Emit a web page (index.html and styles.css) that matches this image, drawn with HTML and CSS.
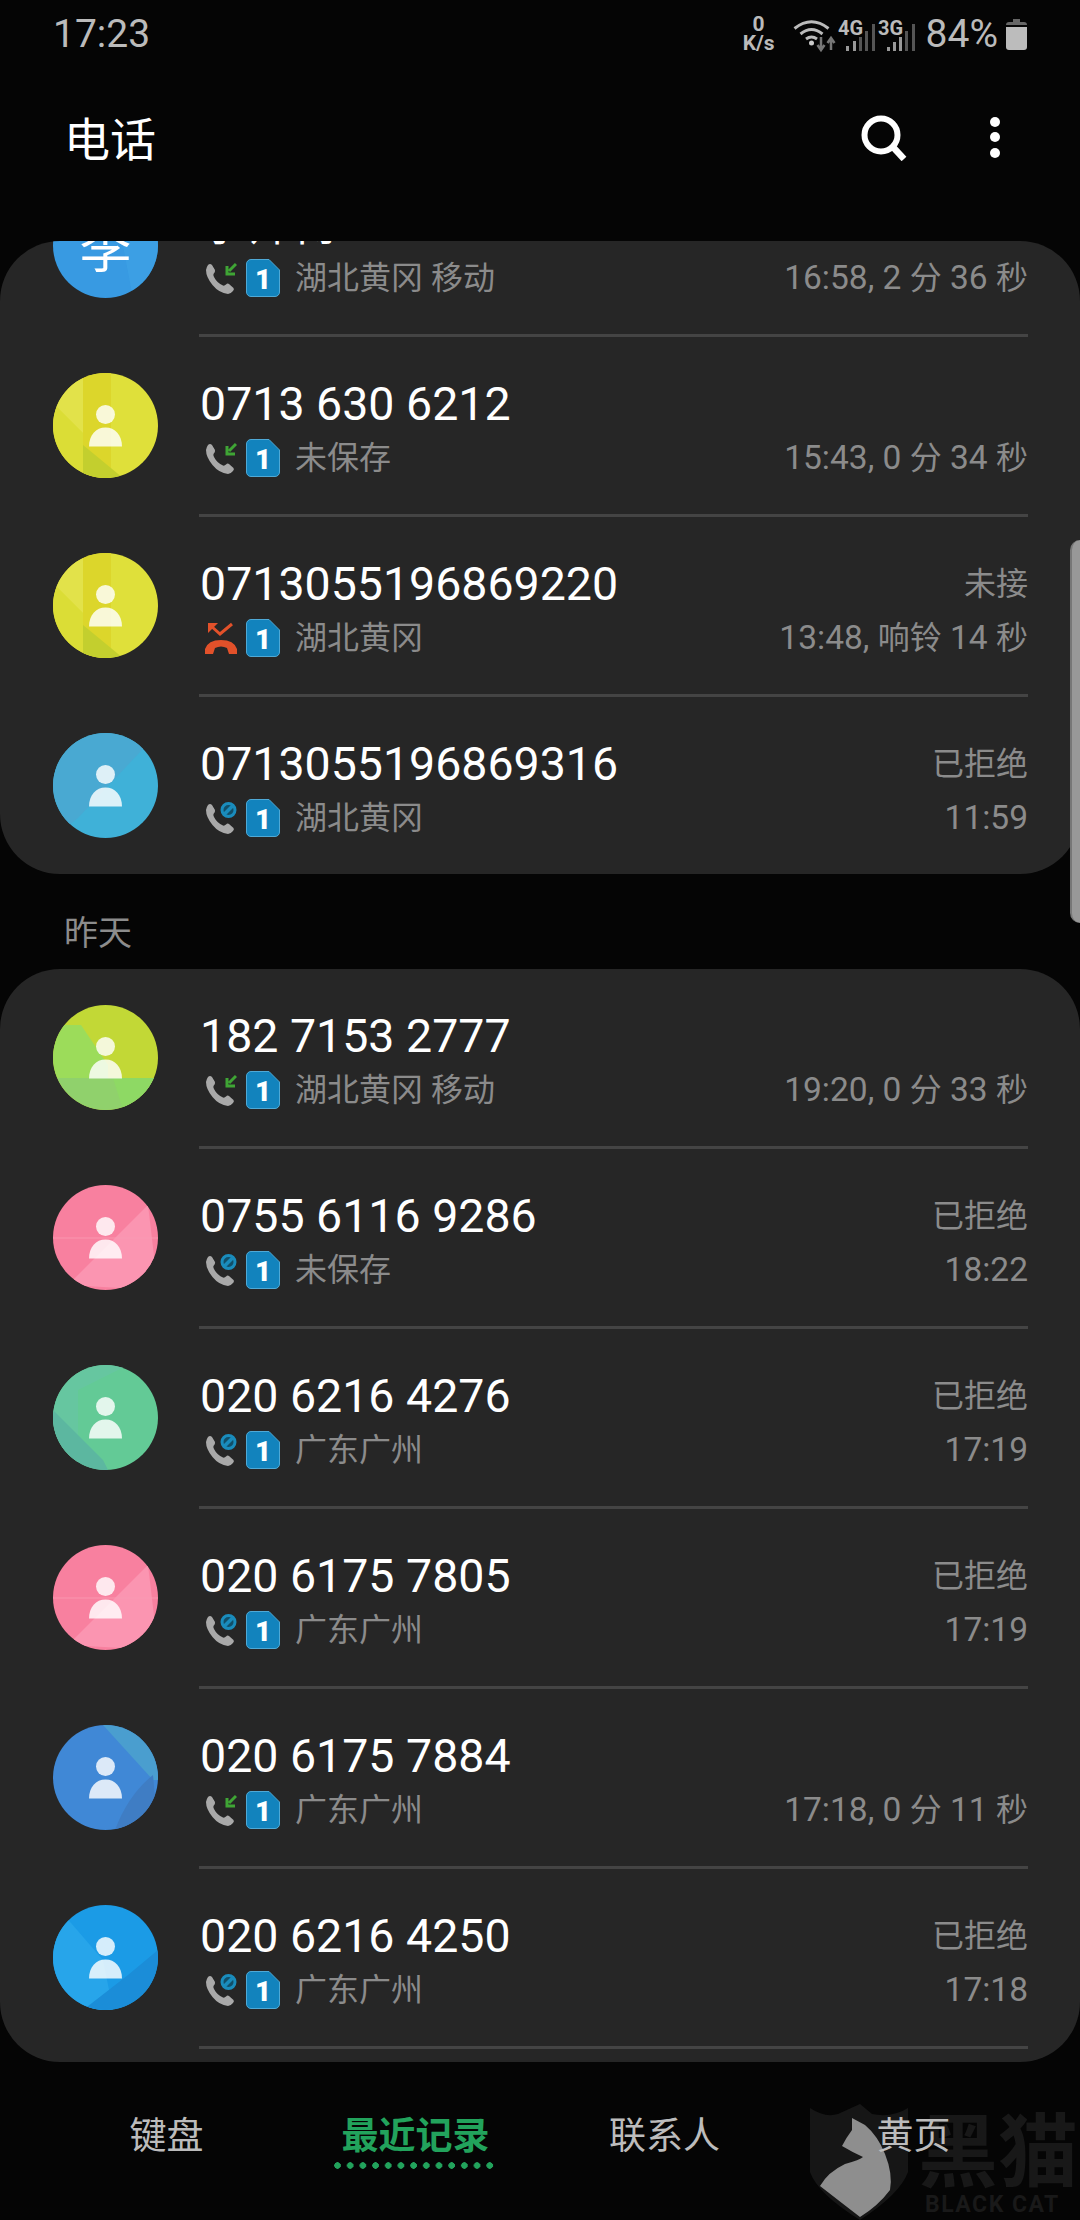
FILE: index.html
```html
<!DOCTYPE html>
<html lang="zh-CN">
<head>
<meta charset="utf-8">
<title>电话</title>
<link rel="stylesheet" href="styles.css">
</head>
<body>
<svg class="defs" aria-hidden="true">
  <symbol id="handset" viewBox="0 0 34 38"><path d="M5 6Q7 4 9 6L12 11Q12.5 13 10.5 15Q10 16 11 18Q14 24 20 26.5Q21.5 27 23 25.5Q24.5 24 26 25L30.5 29Q31.5 30.5 30 32Q27.5 35 25 35Q16 34 9.5 26Q3 18 3 11Q3.5 8 5 6Z" fill="#a9a9a9"/></symbol>
  <symbol id="call-in" viewBox="0 0 34 38"><use href="#handset"/><path d="M33 5L26 12M24 7V15H32" fill="none" stroke="#3fa535" stroke-width="3"/></symbol>
  <symbol id="call-rej" viewBox="0 0 34 38"><use href="#handset"/><circle cx="25.5" cy="11" r="6.5" fill="#114f69" stroke="#1a8cbc" stroke-width="3"/><path d="M21 15.5L30 6.5" stroke="#1a8cbc" stroke-width="3.5"/></symbol>
  <symbol id="call-miss" viewBox="0 0 34 38"><path d="M8 7L17 15L29 5" fill="none" stroke="#e2512a" stroke-width="3"/><path d="M5 4H15L5 14Z" fill="#e2512a"/><path d="M2 35V30Q5 21 18 21Q31 21 34 30V35H26L24 29Q18 26 12 29L10 35Z" fill="#e2512a"/></symbol>
  <symbol id="sim" viewBox="0 0 34 38"><path d="M5 .5H23L33.5 11V33A4.500 4.500 0 0 1 29 37.500H5A4.500 4.500 0 0 1 .5 33V5A4.500 4.500 0 0 1 5 .5Z" fill="#1283bd" stroke="#4fa9d6"/><text x="17" y="30" text-anchor="middle" class="sim-num">1</text></symbol>
  <symbol id="person" viewBox="0 0 105 105"><circle cx="52.500" cy="41.500" r="9.500" fill="#fff" fill-opacity=".82"/><path d="M36 73.500C36 62 43 54.500 52.500 54.500C62 54.500 69 62 69 73.500Z" fill="#fff" fill-opacity=".82"/></symbol>
</svg>

<header class="status">
  <span class="clock">17:23</span>
  <div class="status-right">
    <div class="speed"><span>0</span><span>K/s</span></div>
    <svg class="net" viewBox="0 0 125 40" width="125" height="40">
      <g fill="none" stroke="#bbb" stroke-width="3"><path d="M3.500 14.500Q20.500 1 37.500 14.500"/><path d="M9.500 20Q20.500 11 31.500 20"/><path d="M15 25Q20.500 21 26 25"/></g>
      <circle cx="20.500" cy="29" r="2.500" fill="#ccc"/>
      <path d="M30 23V35M26.500 31L30 36L33.500 31M40 36V25M36.500 29L40 24L43.500 29" fill="none" stroke="#777" stroke-width="2.500"/>
      <text x="47" y="21" class="net-label">4G</text>
      <text x="87" y="21" class="net-label">3G</text>
      <g fill="#999"><rect x="55" y="32" width="3" height="5"/><rect x="62" y="27" width="3" height="10"/><rect x="96" y="33" width="3" height="4"/><rect x="102" y="28" width="3" height="9"/><rect x="108" y="23" width="3" height="14"/></g>
      <g fill="#555"><rect x="68" y="23" width="3" height="14"/><rect x="74" y="17" width="3" height="20"/><rect x="81" y="10" width="3" height="27"/><rect x="114" y="17" width="3" height="20"/><rect x="121" y="10" width="3" height="27"/></g>
    </svg>
    <span class="battery-text">84%</span>
    <svg class="battery" viewBox="0 0 21 31" width="21" height="31"><path d="M7 0H14V3H18Q21 3 21 6H0Q0 3 3 3H7Z" fill="#666"/><path d="M0 8H21V28Q21 31 18 31H3Q0 31 0 28Z" fill="#bcbcbc"/></svg>
  </div>
</header>

<div class="appbar">
  <h1 class="title">电话</h1>
  <div class="actions">
    <svg class="search" viewBox="0 0 46 46" width="46" height="46"><circle cx="20" cy="20" r="16.500" fill="none" stroke="#fff" stroke-width="6"/><path d="M31 31L43 44" stroke="#fff" stroke-width="6.500"/></svg>
    <svg class="more" viewBox="0 0 12 44" width="12" height="44"><circle cx="6" cy="6" r="5" fill="#fff"/><circle cx="6" cy="21" r="5" fill="#fff"/><circle cx="6" cy="37" r="5" fill="#fff"/></svg>
  </div>
</div>

<main>
<section class="card card-today">
  <div class="rows rows-scrolled">
    <article class="row">
      <div class="avatar avatar-letter"><svg viewBox="0 0 105 105"><rect width="105" height="105" fill="#389ae2"/><path d="M60 0H105V105H80Z" fill="#3fa3e6" fill-opacity=".6"/></svg><span class="letter">李</span></div>
      <div class="body">
        <div class="line"><span class="name">李师傅</span></div>
        <div class="line"><div class="meta"><svg class="ic"><use href="#call-in"/></svg><svg class="ic sim"><use href="#sim"/></svg><span class="place">湖北黄冈 移动</span></div><span class="side">16:58, 2 <span class="cn">分</span> 36 <span class="cn">秒</span></span></div>
      </div>
    </article>
    <article class="row">
      <div class="avatar"><svg viewBox="0 0 105 105"><rect width="105" height="105" fill="#dfe03a"/><path d="M0 0H30V60L0 30Z" fill="#e2e24a"/><path d="M0 30L30 60V105H0Z" fill="#dbdd36"/><path d="M30 0H58V105H30Z" fill="#dcd62b"/><path d="M30 72L70 105H30Z" fill="#c3cf2e"/></svg><svg class="person"><use href="#person"/></svg></div>
      <div class="body">
        <div class="line"><span class="name">0713 630 6212</span></div>
        <div class="line"><div class="meta"><svg class="ic"><use href="#call-in"/></svg><svg class="ic sim"><use href="#sim"/></svg><span class="place">未保存</span></div><span class="side">15:43, 0 <span class="cn">分</span> 34 <span class="cn">秒</span></span></div>
      </div>
    </article>
    <article class="row">
      <div class="avatar"><svg viewBox="0 0 105 105"><rect width="105" height="105" fill="#dfe03a"/><path d="M0 0H30V60L0 30Z" fill="#e2e24a"/><path d="M0 30L30 60V105H0Z" fill="#dbdd36"/><path d="M30 0H58V105H30Z" fill="#dcd62b"/><path d="M30 72L70 105H30Z" fill="#c3cf2e"/></svg><svg class="person"><use href="#person"/></svg></div>
      <div class="body">
        <div class="line"><span class="name">0713055196869220</span><span class="side cn">未接</span></div>
        <div class="line"><div class="meta"><svg class="ic"><use href="#call-miss"/></svg><svg class="ic sim"><use href="#sim"/></svg><span class="place">湖北黄冈</span></div><span class="side">13:48, <span class="cn">响铃</span> 14 <span class="cn">秒</span></span></div>
      </div>
    </article>
    <article class="row row-last">
      <div class="avatar"><svg viewBox="0 0 105 105"><rect width="105" height="105" fill="#3fb1d8"/><path d="M0 0H105L25 85L0 105Z" fill="#49a9d2"/></svg><svg class="person"><use href="#person"/></svg></div>
      <div class="body">
        <div class="line"><span class="name">0713055196869316</span><span class="side cn">已拒绝</span></div>
        <div class="line"><div class="meta"><svg class="ic"><use href="#call-rej"/></svg><svg class="ic sim"><use href="#sim"/></svg><span class="place">湖北黄冈</span></div><span class="side">11:59</span></div>
      </div>
    </article>
  </div>
</section>

<h2 class="day">昨天</h2>

<section class="card card-yesterday">
  <article class="row">
    <div class="avatar"><svg viewBox="0 0 105 105"><rect width="105" height="105" fill="#c2d836"/><path d="M0 20H28L55 60V73H0Z" fill="#9cdc5a"/><path d="M0 73H105V105H0Z" fill="#90d16c"/><path d="M60 73H105V105H70Z" fill="#8ed964"/></svg><svg class="person"><use href="#person"/></svg></div>
    <div class="body">
      <div class="line"><span class="name">182 7153 2777</span></div>
      <div class="line"><div class="meta"><svg class="ic"><use href="#call-in"/></svg><svg class="ic sim"><use href="#sim"/></svg><span class="place">湖北黄冈 移动</span></div><span class="side">19:20, 0 <span class="cn">分</span> 33 <span class="cn">秒</span></span></div>
    </div>
  </article>
  <article class="row">
    <div class="avatar"><svg viewBox="0 0 105 105"><rect width="105" height="105" fill="#f8809f"/><path d="M15 100L95 20L105 105Z" fill="#fb95b1"/><path d="M0 52H105V54H0Z" fill="#fb9ab5" fill-opacity=".4"/></svg><svg class="person"><use href="#person"/></svg></div>
    <div class="body">
      <div class="line"><span class="name">0755 6116 9286</span><span class="side cn">已拒绝</span></div>
      <div class="line"><div class="meta"><svg class="ic"><use href="#call-rej"/></svg><svg class="ic sim"><use href="#sim"/></svg><span class="place">未保存</span></div><span class="side">18:22</span></div>
    </div>
  </article>
  <article class="row">
    <div class="avatar"><svg viewBox="0 0 105 105"><rect width="105" height="105" fill="#63ca96"/><path d="M0 0H75L25 25V105H0Z" fill="#66c6a0"/><path d="M0 45L50 95L55 105H0Z" fill="#5cb7a0"/></svg><svg class="person"><use href="#person"/></svg></div>
    <div class="body">
      <div class="line"><span class="name">020 6216 4276</span><span class="side cn">已拒绝</span></div>
      <div class="line"><div class="meta"><svg class="ic"><use href="#call-rej"/></svg><svg class="ic sim"><use href="#sim"/></svg><span class="place">广东广州</span></div><span class="side">17:19</span></div>
    </div>
  </article>
  <article class="row">
    <div class="avatar"><svg viewBox="0 0 105 105"><rect width="105" height="105" fill="#f8809f"/><path d="M15 100L95 20L105 105Z" fill="#fb95b1"/><path d="M0 52H105V54H0Z" fill="#fb9ab5" fill-opacity=".4"/></svg><svg class="person"><use href="#person"/></svg></div>
    <div class="body">
      <div class="line"><span class="name">020 6175 7805</span><span class="side cn">已拒绝</span></div>
      <div class="line"><div class="meta"><svg class="ic"><use href="#call-rej"/></svg><svg class="ic sim"><use href="#sim"/></svg><span class="place">广东广州</span></div><span class="side">17:19</span></div>
    </div>
  </article>
  <article class="row">
    <div class="avatar"><svg viewBox="0 0 105 105"><rect width="105" height="105" fill="#4088d6"/><path d="M50 0H105V55H100Z" fill="#4a9ecf"/><path d="M100 50L105 105H62Q75 70 100 50Z" fill="#3f7dc4"/></svg><svg class="person"><use href="#person"/></svg></div>
    <div class="body">
      <div class="line"><span class="name">020 6175 7884</span></div>
      <div class="line"><div class="meta"><svg class="ic"><use href="#call-in"/></svg><svg class="ic sim"><use href="#sim"/></svg><span class="place">广东广州</span></div><span class="side">17:18, 0 <span class="cn">分</span> 11 <span class="cn">秒</span></span></div>
    </div>
  </article>
  <article class="row">
    <div class="avatar"><svg viewBox="0 0 105 105"><rect width="105" height="105" fill="#1b9be6"/><path d="M0 0L18 18L50 55L60 105H0Z" fill="#27a5ea"/><path d="M30 105L75 70L105 45V105Z" fill="#1b8dd8"/></svg><svg class="person"><use href="#person"/></svg></div>
    <div class="body">
      <div class="line"><span class="name">020 6216 4250</span><span class="side cn">已拒绝</span></div>
      <div class="line"><div class="meta"><svg class="ic"><use href="#call-rej"/></svg><svg class="ic sim"><use href="#sim"/></svg><span class="place">广东广州</span></div><span class="side">17:18</span></div>
    </div>
  </article>
</section>
</main>

<nav class="tabs">
  <a class="tab">键盘</a>
  <a class="tab tab-active">最近记录</a>
  <a class="tab">联系人</a>
  <a class="tab">黄页</a>
</nav>

<div class="scroll-handle"></div>

<div class="watermark">
  <svg class="cat" viewBox="0 0 112 130" width="112" height="130">
    <path d="M10 18Q25 28 38 24L60 14L72 24Q92 28 108 18V82Q100 104 60 130Q18 104 10 82Z" fill="#161616"/>
    <path d="M52 28L65 35Q78 46 85 64Q93 84 90 100Q78 116 60 127Q38 110 20 96Q28 82 45 74Q60 70 63 67Q52 62 42 56Q46 48 52 40Z" fill="#8e8e8e"/>
  </svg>
  <span class="wm-cn">黑猫</span>
  <span class="wm-en">BLACK CAT</span>
</div>
</body>
</html>
```

FILE: styles.css
```css
* { box-sizing: border-box; }
html, body { margin: 0; padding: 0; }
body {
  position: relative;
  width: 1080px;
  height: 2220px;
  overflow: hidden;
  background: #050505;
  color: #fff;
  font-family: Roboto, "Noto Sans CJK SC", sans-serif;
}
.defs { position: absolute; width: 0; height: 0; }
.sim-num { font: 900 28px Roboto, sans-serif; fill: #fff; }

.status {
  display: flex;
  justify-content: space-between;
  align-items: center;
  height: 68px;
  padding: 0 53px;
}
.clock { font-size: 39px; color: #bbb; }
.status-right { display: flex; align-items: center; }
.speed {
  display: flex;
  flex-direction: column;
  align-items: center;
  width: 34px;
  margin-right: 15px;
  color: #bbb;
  font-size: 21px;
  font-weight: 700;
  line-height: 19px;
}
.net { margin-right: 10px; }
.net-label { font: 700 20px Roboto, sans-serif; fill: #bbb; }
.battery-text { font-size: 39px; color: #bbb; margin-right: 8px; }

.appbar {
  display: flex;
  justify-content: space-between;
  align-items: center;
  height: 173px;
  padding: 0 79px 37px 64px;
}
.title { margin: 0; font-size: 46px; font-weight: 400; }
.actions { display: flex; align-items: center; gap: 82px; margin-top: 3px; }

.card { background: #262626; border-radius: 60px; overflow: hidden; }
.card-today { height: 633px; }
.rows-scrolled { margin-top: -84px; }
.card-yesterday { height: 1093px; }

.day {
  display: flex;
  align-items: center;
  height: 95px;
  margin: 0;
  padding: 17px 0 0 64px;
  font-size: 34px;
  font-weight: 400;
  color: #8c8c8c;
}

.row { display: flex; align-items: center; height: 180px; padding-left: 53px; }
.avatar {
  position: relative;
  flex: none;
  width: 105px;
  height: 105px;
  margin-right: 41px;
  margin-bottom: 3px;
  border-radius: 50%;
  overflow: hidden;
}
.avatar > svg { position: absolute; left: 0; top: 0; width: 105px; height: 105px; }
.letter {
  position: absolute;
  inset: 0;
  display: flex;
  align-items: center;
  justify-content: center;
  font-size: 52px;
  color: #fff;
}
.body {
  flex: 1;
  height: 180px;
  margin-right: 52px;
  padding-top: 42px;
  border-bottom: 3px solid #444;
}
.row-last { height: 177px; }
.row-last .avatar { margin-bottom: 0; }
.row-last .body { height: 177px; border-bottom: 0; }
.line {
  display: flex;
  justify-content: space-between;
  align-items: center;
  height: 50px;
  margin-bottom: 4px;
}
.name { font-size: 46.500px; line-height: 50px; color: #fff; margin-left: 1px; }
.side { font-size: 33.500px; line-height: 50px; color: #8b8b8b; }
.cn { font-size: 32px; }
.meta { display: flex; align-items: center; padding-left: 4px; }
.ic { width: 34px; height: 38px; flex: none; }
.sim { margin-left: 9px; margin-right: 15px; }
.place { font-size: 32px; line-height: 50px; color: #8b8b8b; }

.tabs {
  position: relative;
  z-index: 2;
  display: grid;
  grid-template-columns: repeat(4, 249px);
  padding: 50px 42px 0;
}
.tab {
  position: relative;
  justify-self: center;
  font-size: 37px;
  line-height: 50px;
  color: #bcbcbc;
}
.tab-active { font-weight: 700; color: #22a35c; }
.tab-active::after {
  content: "";
  position: absolute;
  left: -8px;
  right: -8px;
  top: 50px;
  height: 7px;
  background: radial-gradient(circle at 3.500px 3.500px, #22a35c 3px, transparent 3.500px) 0 0 / 12.700px 7px repeat-x;
}

.scroll-handle {
  position: absolute;
  top: 540px;
  right: 0;
  width: 10px;
  height: 383px;
  border-radius: 10px 0 0 10px;
  background: #989898;
  border-left: 2px solid #777;
}

.watermark { position: absolute; left: 800px; top: 2090px; width: 280px; height: 130px; }
.cat { position: absolute; left: 0; top: 0; }
.wm-cn {
  position: absolute;
  left: 118px;
  top: 18px;
  font-size: 80px;
  font-weight: 700;
  line-height: 90px;
  color: #181818;
  white-space: nowrap;
}
.wm-en {
  position: absolute;
  left: 125px;
  top: 103px;
  font-size: 23px;
  font-weight: 700;
  line-height: 24px;
  letter-spacing: 1.500px;
  color: #191919;
  white-space: nowrap;
}
```
